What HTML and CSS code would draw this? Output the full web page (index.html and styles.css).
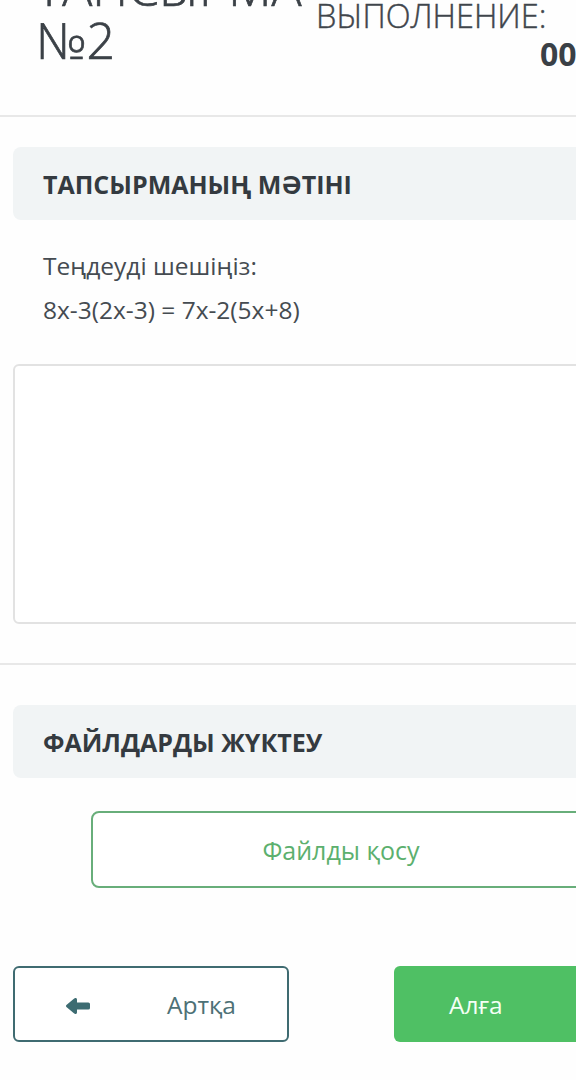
FILE: index.html
```html
<!DOCTYPE html>
<html lang="kk">
<head>
<meta charset="utf-8">
<title>Тапсырма №2</title>
<link rel="stylesheet" href="styles.css">
</head>
<body>
<div class="page">
  <header class="top">
    <h1 class="title">ТАПСЫРМА<br>№2</h1>
    <div class="timer">
      <div class="timer-label">ВЫПОЛНЕНИЕ:</div>
      <div class="timer-value">00:45:00</div>
    </div>
  </header>
  <hr class="divider">
  <section class="block">
    <div class="block-head">ТАПСЫРМАНЫҢ МӘТІНІ</div>
    <p class="task-line first">Теңдеуді шешіңіз:</p>
    <p class="task-line">8x-3(2x-3) = 7x-2(5x+8)</p>
    <div class="answer" contenteditable="true"></div>
  </section>
  <hr class="divider">
  <section class="block">
    <div class="block-head files">ФАЙЛДАРДЫ ЖҮКТЕУ</div>
    <button class="add-file" type="button">Файлды қосу</button>
    <div class="nav">
      <button class="nav-btn back" type="button">
        <svg class="arrow" viewBox="0 0 24 16" width="24" height="16"><path d="M0.7 9.3 L8.2 15.5 Q10.6 17 11 14.4 L11 11.6 L22.3 11.6 Q24 11.6 24 9.9 L24 6.1 Q24 4.4 22.3 4.4 L11 4.4 L11 1.6 Q10.6 -1 8.2 0.5 L0.7 6.7 Q-0.8 8 0.7 9.3 Z" fill="currentColor"/></svg>
        <span>Артқа</span>
      </button>
      <button class="nav-btn next" type="button">
        <span>Алға</span>
        <svg class="arrow" viewBox="0 0 24 16" width="24" height="16"><path d="M23.3 9.3 L15.8 15.5 Q13.4 17 13 14.4 L13 11.6 L1.7 11.6 Q0 11.6 0 9.9 L0 6.1 Q0 4.4 1.7 4.4 L13 4.4 L13 1.6 Q13.4 -1 15.8 0.5 L23.3 6.7 Q24.8 8 23.3 9.3 Z" fill="currentColor"/></svg>
      </button>
    </div>
  </section>
</div>
</body>
</html>
```
FILE: styles.css
```css
html, body {
  margin: 0;
  padding: 0;
  background: #fefefe;
  overflow: hidden;
}
body {
  font-family: "Open Sans", "Noto Sans", sans-serif;
  color: #444a50;
}
.page {
  width: 680px;
}
.top {
  margin-top: -39px;
  height: 154px;
  display: grid;
  grid-template-columns: 316px 1fr;
}
.title {
  margin: 0;
  padding-left: 36px;
  font-size: 50px;
  line-height: 53px;
  font-weight: 300;
  -webkit-text-stroke: 0.7px currentColor;
  color: #3b4147;
  white-space: nowrap;
}
.timer {
  padding-top: 37px;
}
.timer-label {
  font-size: 32.5px;
  line-height: 36px;
  font-weight: 300;
  -webkit-text-stroke: 0.4px currentColor;
  color: #3f454b;
  white-space: nowrap;
}
.timer-value {
  margin-top: 1px;
  padding-left: 224px;
  font-size: 32px;
  line-height: 38px;
  font-weight: 700;
  color: #3a4046;
  white-space: nowrap;
}
.divider {
  margin: 0;
  border: 0;
  height: 2px;
  background: #e8e8e8;
}
.block {
  padding-left: 13px;
}
.block-head {
  margin-top: 30px;
  height: 73px;
  border-radius: 8px;
  background: #f1f4f5;
  padding-left: 30px;
  display: flex;
  align-items: center;
  font-size: 25px;
  font-weight: 700;
  color: #343a40;
  white-space: nowrap;
}
.block-head.files {
  margin-top: 40px;
}
.task-line {
  margin: 10px 0 0 30px;
  font-size: 24.5px;
  line-height: 34px;
  color: #454b51;
}
.task-line.first {
  margin-top: 29px;
}
.answer {
  margin-top: 37px;
  height: 256px;
  border: 2px solid #e2e2e2;
  border-radius: 6px;
  margin-bottom: 39px;
  background: #fff;
}
.add-file {
  display: block;
  margin: 33px 0 0 78px;
  width: 500px;
  height: 77px;
  border: 2px solid #68ae7a;
  border-radius: 8px;
  background: #fff;
  font-family: inherit;
  font-size: 25px;
  color: #5cb06e;
}
.nav {
  margin-top: 78px;
  display: flex;
  gap: 105px;
}
.nav-btn {
  width: 276px;
  height: 76px;
  border-radius: 6px;
  display: flex;
  align-items: center;
  font-family: inherit;
  font-size: 24.5px;
  padding: 0;
}
.nav-btn .arrow {
  flex: none;
  margin-top: 4px;
}
.nav-btn.back {
  border: 2px solid #3f6b71;
  background: #fff;
  color: #4d7176;
  padding-left: 51px;
  gap: 77px;
}
.nav-btn.back .arrow {
  color: #3d6c72;
}
.nav-btn.next {
  border: 0;
  background: #4fc064;
  color: #f4fff5;
  padding-left: 55px;
  gap: 90px;
}
```
